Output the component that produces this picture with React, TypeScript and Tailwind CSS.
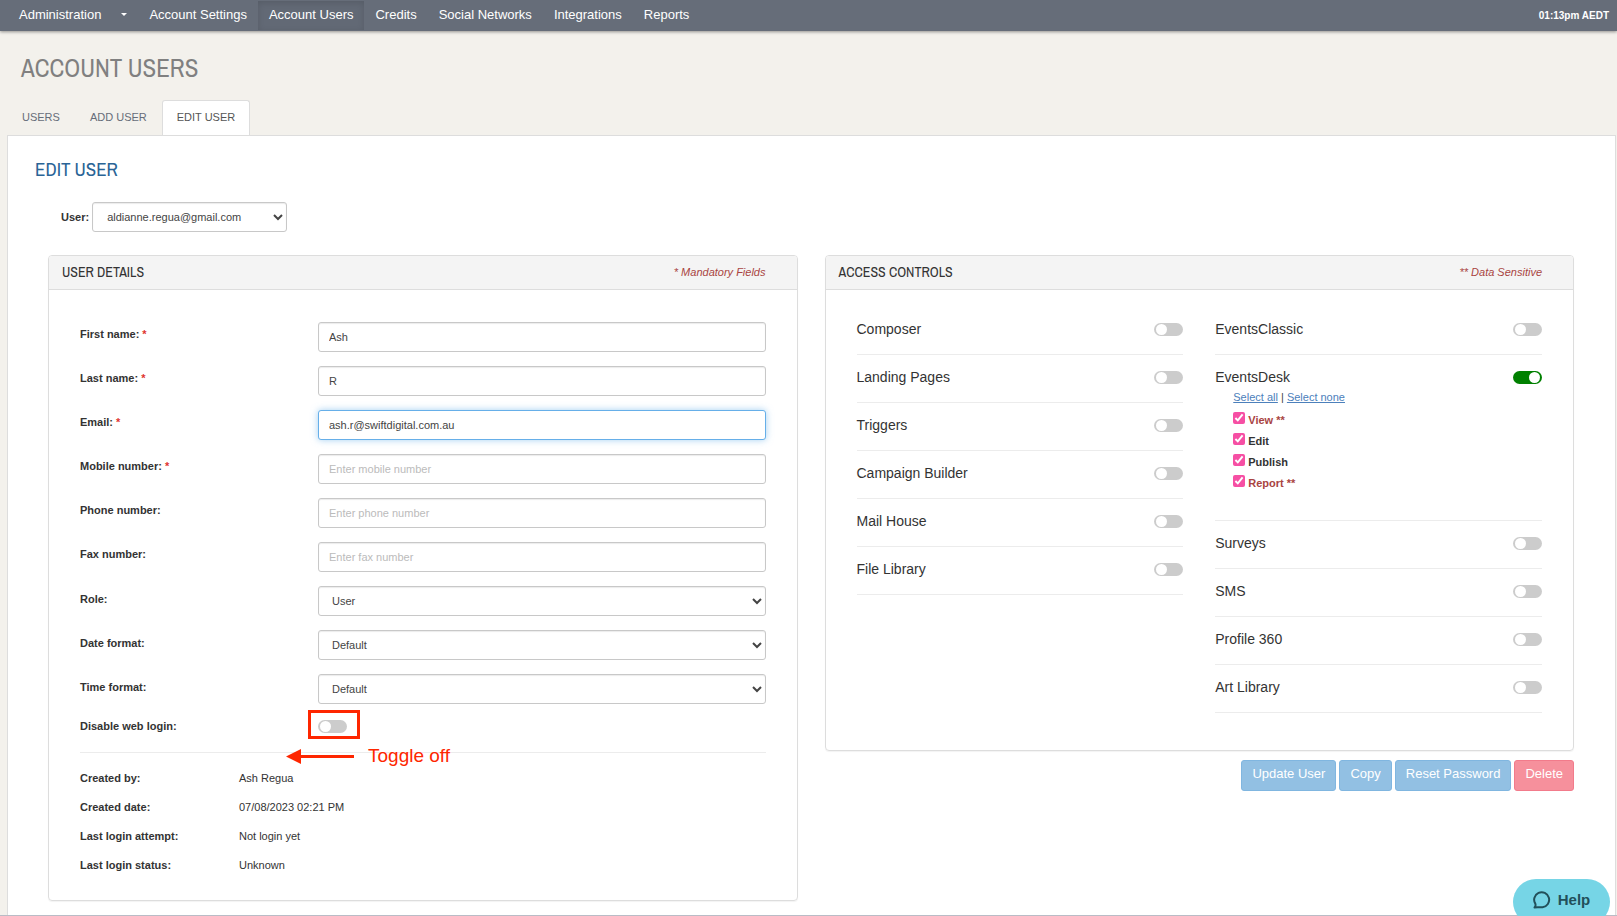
import { useState } from 'react';

interface Permission {
  name: string;
  sensitive?: boolean;
}

interface Module {
  name: string;
  enabled?: boolean;
  permissions?: Permission[];
}

const navItems = ['Account Settings', 'Account Users', 'Credits', 'Social Networks', 'Integrations', 'Reports'];

const tabs = ['Users', 'Add user', 'Edit user'];

const textFields = [
  { id: 'firstName', label: 'First name:', required: true, value: 'Ash', placeholder: 'Enter first name' },
  { id: 'lastName', label: 'Last name:', required: true, value: 'R', placeholder: 'Enter last name' },
  { id: 'email', label: 'Email:', required: true, value: 'ash.r@swiftdigital.com.au', placeholder: 'Enter email', active: true },
  { id: 'mobile', label: 'Mobile number:', required: true, value: '', placeholder: 'Enter mobile number' },
  { id: 'phone', label: 'Phone number:', value: '', placeholder: 'Enter phone number' },
  { id: 'fax', label: 'Fax number:', value: '', placeholder: 'Enter fax number' },
];

const selectFields = [
  { id: 'role', label: 'Role:', options: ['User', 'Administrator'] },
  { id: 'dateFormat', label: 'Date format:', options: ['Default', 'DD/MM/YYYY'] },
  { id: 'timeFormat', label: 'Time format:', options: ['Default', '24 hour'] },
];

const loginInfo = [
  ['Created by:', 'Ash Regua'],
  ['Created date:', '07/08/2023 02:21 PM'],
  ['Last login attempt:', 'Not login yet'],
  ['Last login status:', 'Unknown'],
];

const moduleColumns: Module[][] = [
  [
    { name: 'Composer' },
    { name: 'Landing Pages' },
    { name: 'Triggers' },
    { name: 'Campaign Builder' },
    { name: 'Mail House' },
    { name: 'File Library' },
  ],
  [
    { name: 'EventsClassic' },
    {
      name: 'EventsDesk',
      enabled: true,
      permissions: [
        { name: 'View', sensitive: true },
        { name: 'Edit' },
        { name: 'Publish' },
        { name: 'Report', sensitive: true },
      ],
    },
    { name: 'Surveys' },
    { name: 'SMS' },
    { name: 'Profile 360' },
    { name: 'Art Library' },
  ],
];

const narrow = "font-['Archivo_Narrow','Roboto_Condensed','Open_Sans_Condensed',Roboto,sans-serif] uppercase";
const control = 'h-[30px] rounded-[3px] border border-[#c8c8c8] bg-white text-[11px] text-[#444] shadow-[inset_0_1px_1px_rgba(0,0,0,0.08)]';

function Toggle({ id, defaultChecked }: { id: string; defaultChecked?: boolean }) {
  return (
    <input
      type="checkbox"
      role="switch"
      id={id}
      defaultChecked={defaultChecked}
      className="flex h-[13px] w-[29px] shrink-0 appearance-none items-center rounded-full bg-[#ccc] px-[2px] before:size-[11px] before:rounded-full before:bg-white checked:justify-end checked:bg-[#008000]"
    />
  );
}

function CardHeader({ title, note }: { title: string; note: string }) {
  return (
    <div className="flex h-[34px] items-center justify-between rounded-t-[3px] border-b border-[#ddd] bg-[#f4f4f4] pr-[31px] pl-[13px]">
      <h3 className={`${narrow} text-[14px] text-[#333]`}>{title}</h3>
      <span className="text-[11px] text-[#a94442] italic">{note}</span>
    </div>
  );
}

function PermissionList({ permissions }: { permissions: Permission[] }) {
  const [checked, setChecked] = useState(permissions.map(() => true));

  return (
    <div className="h-[132px] pt-px pl-[18px] text-[11px]">
      <div className="mb-[5px] h-4 leading-4 text-[#444]">
        <button type="button" onClick={() => setChecked(permissions.map(() => true))} className="text-[#4c80bb] underline">
          Select all
        </button>
        {' | '}
        <button type="button" onClick={() => setChecked(permissions.map(() => false))} className="text-[#4c80bb] underline">
          Select none
        </button>
      </div>
      {permissions.map((permission, i) => (
        <label key={permission.name} className="flex h-[21px] items-start gap-[3px] font-bold">
          <input
            type="checkbox"
            checked={checked[i]}
            onChange={() => setChecked(checked.map((c, j) => (j === i ? !c : c)))}
            className="mt-[2px] size-3 accent-[#f64fa4]"
          />
          <span className={`leading-[21px] ${permission.sensitive ? 'text-[#a94442]' : 'text-[#333]'}`}>
            {permission.name}
            {permission.sensitive && ' **'}
          </span>
        </label>
      ))}
    </div>
  );
}

function ModuleRow({ module }: { module: Module }) {
  return (
    <li className="border-b border-[#ececec]">
      <div className={`flex items-center justify-between ${module.permissions ? 'h-[33px] pt-[11px]' : 'h-[47px] pb-[3px]'}`}>
        <label htmlFor={module.name} className="text-[14px] text-[#333]">
          {module.name}
        </label>
        <Toggle id={module.name} defaultChecked={module.enabled} />
      </div>
      {module.permissions && <PermissionList permissions={module.permissions} />}
    </li>
  );
}

export default function App() {
  const [values, setValues] = useState<Record<string, string>>(
    Object.fromEntries(textFields.map((f) => [f.id, f.value]))
  );

  return (
    <div className="flex min-h-screen flex-col border-b border-[#b9bcc6] bg-[#f3f1ec] font-['Liberation_Sans',Arial,sans-serif]">
      <nav className="flex h-[31px] items-center justify-between bg-[#666d79] pr-2 pl-2 text-white shadow-[0_1px_3px_rgba(0,0,0,0.4)]">
        <div className="flex h-full text-[13px] leading-[27px]">
          <button type="button" className="flex items-center gap-5 px-[11px] pb-[2px]">
            Administration
            <svg width="6" height="3" viewBox="0 0 6 3" fill="currentColor">
              <path d="M0 0h6L3 3z" />
            </svg>
          </button>
          {navItems.map((item) => (
            <a
              key={item}
              href="#"
              className={`mt-px mb-px px-[11px] ${item === 'Account Users' ? 'bg-[#626975] shadow-[inset_0_2px_6px_rgba(0,0,0,0.12)]' : ''}`}
            >
              {item}
            </a>
          ))}
        </div>
        <span className="text-[10px] font-bold">01:13pm AEDT</span>
      </nav>

      <h1 className={`${narrow} mt-[22px] ml-[21px] text-[25px] leading-[30px] text-[#808080]`}>Account Users</h1>

      <div className="mt-[17px] ml-[7px] flex text-[11px] uppercase">
        {tabs.map((tab) => (
          <a
            key={tab}
            href="#"
            className={`-mb-px h-9 rounded-t-[3px] border px-[14px] leading-[33px] ${
              tab === 'Edit user' ? 'border-[#ddd] border-b-white bg-white text-[#555]' : 'border-transparent text-[#666d79]'
            }`}
          >
            {tab}
          </a>
        ))}
      </div>

      <main className="mr-px ml-[7px] grow border border-b-0 border-[#ddd] bg-white pb-[13px]">
        <h2 className={`${narrow} mt-[21px] ml-[27px] text-[19px] leading-6 text-[#2a6496]`}>Edit user</h2>

        <div className="mt-[21px] ml-[53px] flex items-center gap-[3px] text-[11px]">
          <label htmlFor="user" className="font-bold text-[#333]">
            User:
          </label>
          <select id="user" className={`${control} w-[195px] pl-[10px]`}>
            <option>aldianne.regua@gmail.com</option>
          </select>
        </div>

        <div className="mt-[23px] mr-[41px] ml-10 grid grid-cols-2 items-start gap-[27px]">
          <section className="rounded-[4px] border border-[#ddd] shadow-[0_1px_1px_rgba(0,0,0,0.05)]">
            <CardHeader title="User details" note="* Mandatory Fields" />
            <div className="px-[31px] pt-8 pb-5 text-[11px] text-[#333]">
              {textFields.map((field) => (
                <div key={field.id} className="mb-[14px] flex">
                  <label htmlFor={field.id} className="w-[238px] shrink-0 leading-6 font-bold">
                    {field.label} {field.required && <span className="text-[#e0352f]">*</span>}
                  </label>
                  <input
                    type="text"
                    id={field.id}
                    value={values[field.id]}
                    placeholder={field.placeholder}
                    onChange={(e) => setValues({ ...values, [field.id]: e.target.value })}
                    className={`min-w-0 grow px-[10px] outline-none placeholder:text-[#bbb] ${
                      field.active
                        ? 'h-[30px] rounded-[3px] border border-[#66afe9] bg-white text-[11px] text-[#444] shadow-[0_0_7px_rgba(102,175,233,0.6)]'
                        : control
                    }`}
                  />
                </div>
              ))}
              {selectFields.map((field) => (
                <div key={field.id} className="mb-[14px] flex">
                  <label htmlFor={field.id} className="w-[238px] shrink-0 leading-[26px] font-bold">
                    {field.label}
                  </label>
                  <select id={field.id} className={`${control} min-w-0 grow pl-[9px]`}>
                    {field.options.map((option) => (
                      <option key={option}>{option}</option>
                    ))}
                  </select>
                </div>
              ))}

              <div className="flex h-[17px] items-center">
                <label htmlFor="disableLogin" className="w-[238px] shrink-0 font-bold">
                  Disable web login:
                </label>
                <div className="relative">
                  <Toggle id="disableLogin" />
                  {/* callout drawn over the form */}
                  <div className="absolute -top-[10px] -left-[10px] h-[29px] w-[52px] border-3 border-[#fe2600]" />
                  <div className="absolute top-[22px] -left-8 flex items-center gap-[14px] text-[19px] whitespace-nowrap text-[#fe2600]">
                    <svg width="68" height="15" viewBox="0 0 68 15" fill="currentColor">
                      <path d="M0 7.5 15 0v6h53v3H15v6z" />
                    </svg>
                    Toggle off
                  </div>
                </div>
              </div>

              <dl className="mt-[17px] border-t border-[#ececec] pt-[11px]">
                {loginInfo.map(([label, value]) => (
                  <div key={label} className="flex h-[29px] items-center">
                    <dt className="w-[159px] font-bold">{label}</dt>
                    <dd>{value}</dd>
                  </div>
                ))}
              </dl>
            </div>
          </section>

          <div>
            <section className="rounded-[4px] border border-[#ddd] shadow-[0_1px_1px_rgba(0,0,0,0.05)]">
              <CardHeader title="Access controls" note="** Data Sensitive" />
              <div className="grid grid-cols-2 gap-8 px-[31px] pt-[17px] pb-[37px]">
                {moduleColumns.map((modules, i) => (
                  <ul key={i}>
                    {modules.map((module) => (
                      <ModuleRow key={module.name} module={module} />
                    ))}
                  </ul>
                ))}
              </div>
            </section>

            <div className="mt-[9px] flex justify-end gap-[3px] text-[13px] text-white">
              {['Update User', 'Copy', 'Reset Password'].map((action) => (
                <button key={action} type="button" className="h-[31px] rounded-[3px] border border-[#80b6e0] bg-[#92c0e3] px-[10px] pb-1">
                  {action}
                </button>
              ))}
              <button type="button" className="h-[31px] rounded-[3px] border border-[#f27b8b] bg-[#f6909c] px-[10px] pb-1">
                Delete
              </button>
            </div>
          </div>
        </div>
      </main>

      <button
        type="button"
        className="fixed right-[7px] -bottom-[9px] flex h-[46px] w-[97px] items-center justify-center gap-[7px] rounded-full bg-[#76d5e6] pb-1 text-[15px] font-bold text-[#22505a]"
      >
        <svg width="18" height="18" viewBox="0 0 18 18" fill="none" stroke="currentColor" strokeWidth="2" strokeLinejoin="round">
          <path d="M1.5 16.5c1-1 1.300-2.200.9-3.600A7.500 7.500 0 1 1 9.500 16.200c-2.400 0-5 .2-8 .3z" />
        </svg>
        Help
      </button>
    </div>
  );
}
